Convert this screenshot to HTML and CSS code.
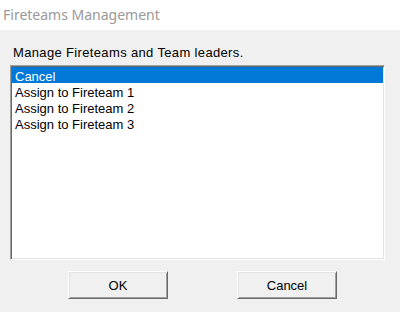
FILE: index.html
```html
<!DOCTYPE html>
<html>
<head>
<meta charset="utf-8">
<link rel="stylesheet" href="styles.css">
</head>
<body>
<div class="window">
  <div class="titlebar">Fireteams Management</div>
  <div class="client">
    <div class="label">Manage Fireteams and Team leaders.</div>
    <div class="listbox">
      <div class="item selected">Cancel</div>
      <div class="item">Assign to Fireteam 1</div>
      <div class="item">Assign to Fireteam 2</div>
      <div class="item">Assign to Fireteam 3</div>
    </div>
    <div class="buttons">
      <button class="btn">OK</button>
      <button class="btn">Cancel</button>
    </div>
  </div>
</div>
</body>
</html>
```
FILE: styles.css
```css
html, body {
  margin: 0;
  padding: 0;
}
body {
  width: 400px;
  height: 312px;
  background: #f0f0f0;
  overflow: hidden;
}
.window {
  display: flex;
  flex-direction: column;
  height: 312px;
}
.titlebar {
  height: 30px;
  line-height: 30px;
  background: #ffffff;
  color: #999999;
  font-family: "Noto Sans", "Open Sans", sans-serif;
  font-size: 14px;
  padding-left: 3px;
}
.client {
  font-family: "Liberation Sans", Arial, sans-serif;
  font-size: 13px;
  color: #000;
  padding: 15px 15px 0 10px;
}
.label {
  line-height: 16px;
  height: 16px;
  padding-left: 3px;
  margin-bottom: 4px;
  letter-spacing: 0.35px;
}
.listbox {
  box-sizing: border-box;
  width: 375px;
  height: 195px;
  background: #fff;
  border-style: solid;
  border-width: 1px;
  border-color: #a0a0a0 #ffffff #ffffff #a0a0a0;
  box-shadow: inset 1px 1px 0 #696969, inset -1px -1px 0 #e3e3e3;
  padding: 1px;
}
.item {
  box-sizing: border-box;
  height: 16px;
  line-height: 16px;
  padding: 2px 0 0 3px;
  white-space: nowrap;
}
.selected {
  background: #0078d7;
  color: #fff;
}
.buttons {
  display: flex;
  gap: 69px;
  margin-top: 11px;
  padding-left: 58px;
}
.btn {
  box-sizing: border-box;
  width: 100px;
  height: 28px;
  margin: 0;
  padding: 0;
  font-family: "Liberation Sans", Arial, sans-serif;
  font-size: 13px;
  color: #000;
  background: #f0f0f0;
  border-style: solid;
  border-width: 1px;
  border-color: #ffffff #696969 #696969 #ffffff;
  box-shadow: inset 1px 1px 0 #e3e3e3, inset -1px -1px 0 #a0a0a0;
}
```
